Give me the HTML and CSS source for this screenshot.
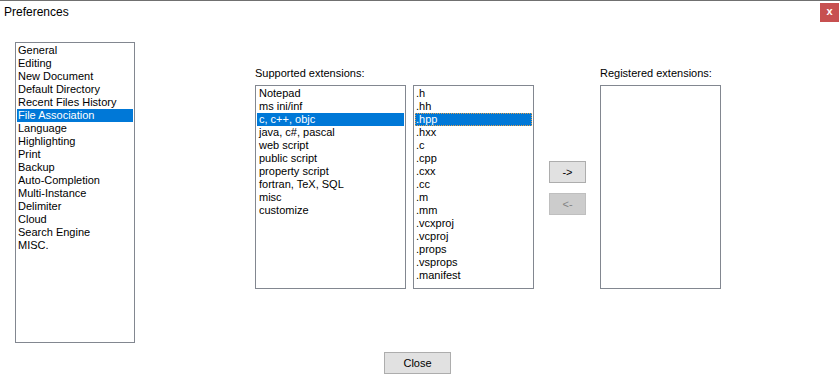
FILE: index.html
```html
<!DOCTYPE html>
<html lang="en">
<head>
    <meta charset="UTF-8">
    <title>Preferences</title>
    <link rel="stylesheet" href="styles.css">
</head>
<body>
    <div class="window">
        <div class="titlebar">
            <span class="title">Preferences</span>
            <span class="close-box">x</span>
        </div>
        <div class="main">
            <ul class="listbox cat-list">
                <li>General</li>
                <li>Editing</li>
                <li>New Document</li>
                <li>Default Directory</li>
                <li>Recent Files History</li>
                <li class="selected">File Association</li>
                <li>Language</li>
                <li>Highlighting</li>
                <li>Print</li>
                <li>Backup</li>
                <li>Auto-Completion</li>
                <li>Multi-Instance</li>
                <li>Delimiter</li>
                <li>Cloud</li>
                <li>Search Engine</li>
                <li>MISC.</li>
            </ul>
            <div class="ext-group">
                <div class="label">Supported extensions:</div>
                <div class="ext-row">
                    <ul class="listbox lang-list">
                        <li>Notepad</li>
                        <li>ms ini/inf</li>
                        <li class="selected">c, c++, objc</li>
                        <li>java, c#, pascal</li>
                        <li>web script</li>
                        <li>public script</li>
                        <li>property script</li>
                        <li>fortran, TeX, SQL</li>
                        <li>misc</li>
                        <li>customize</li>
                    </ul>
                    <ul class="listbox ext-list">
                        <li>.h</li>
                        <li>.hh</li>
                        <li class="selected focused">.hpp</li>
                        <li>.hxx</li>
                        <li>.c</li>
                        <li>.cpp</li>
                        <li>.cxx</li>
                        <li>.cc</li>
                        <li>.m</li>
                        <li>.mm</li>
                        <li>.vcxproj</li>
                        <li>.vcproj</li>
                        <li>.props</li>
                        <li>.vsprops</li>
                        <li>.manifest</li>
                    </ul>
                </div>
            </div>
            <div class="move-buttons">
                <button type="button" class="btn">-&gt;</button>
                <button type="button" class="btn" disabled>&lt;-</button>
            </div>
            <div class="ext-group reg-group">
                <div class="label">Registered extensions:</div>
                <ul class="listbox ext-list"></ul>
            </div>
        </div>
        <div class="footer">
            <button type="button" class="btn close-btn">Close</button>
        </div>
    </div>
</body>
</html>
```

FILE: styles.css
```css
body {
    margin: 0;
    padding: 0;
    background: #fff;
    font-family: "Liberation Sans", Arial, sans-serif;
    font-size: 11px;
    color: #000;
    overflow: hidden;
}
.window {
    width: 840px;
    height: 384px;
    box-sizing: border-box;
    border-top: 1px solid #707070;
}
.titlebar {
    height: 26px;
    display: flex;
    justify-content: space-between;
    align-items: flex-start;
}
.title {
    font-size: 12px;
    line-height: 14px;
    padding: 4px 0 0 4px;
}
.close-box {
    margin: 2px 1px 0 0;
    width: 19px;
    height: 19px;
    background: #c75050;
    color: #fff;
    font-weight: bold;
    font-size: 11px;
    line-height: 17px;
    text-align: center;
}
.main {
    display: flex;
    align-items: flex-start;
    padding: 15px 0 0 15px;
}
.listbox {
    list-style: none;
    margin: 0;
    padding: 1px;
    box-sizing: border-box;
    border: 1px solid #828790;
    background: #fff;
    overflow: hidden;
}
.listbox li {
    height: 13px;
    line-height: 13px;
    padding-left: 1px;
    white-space: nowrap;
}
.listbox li.selected {
    background: #0078d7;
    color: #fff;
}
.listbox li.focused {
    box-sizing: border-box;
    border: 1px dotted #e0a050;
    padding-left: 0;
    line-height: 11px;
}
.cat-list {
    width: 120px;
    height: 301px;
}
.ext-group {
    margin: 24px 0 0 120px;
}
.label {
    height: 19px;
    line-height: 14px;
}
.ext-row {
    display: flex;
    gap: 7px;
}
.lang-list {
    width: 151px;
    height: 204px;
}
.ext-list {
    width: 121px;
    height: 204px;
}
.lang-list li {
    padding-left: 2px;
}
.move-buttons {
    display: flex;
    flex-direction: column;
    gap: 10px;
    margin: 119px 0 0 15px;
}
.btn {
    font-family: "Liberation Sans", Arial, sans-serif;
    font-size: 11px;
    color: #000;
    background: #e1e1e1;
    border: 1px solid #adadad;
    padding: 0;
    width: 37px;
    height: 22px;
}
.btn:disabled {
    background: #cccccc;
    border-color: #bfbfbf;
    color: #838383;
}
.reg-group {
    margin-left: 14px;
}
.footer {
    display: flex;
    justify-content: center;
    padding: 9px 5px 0 0;
}
.close-btn {
    width: 67px;
}
```
